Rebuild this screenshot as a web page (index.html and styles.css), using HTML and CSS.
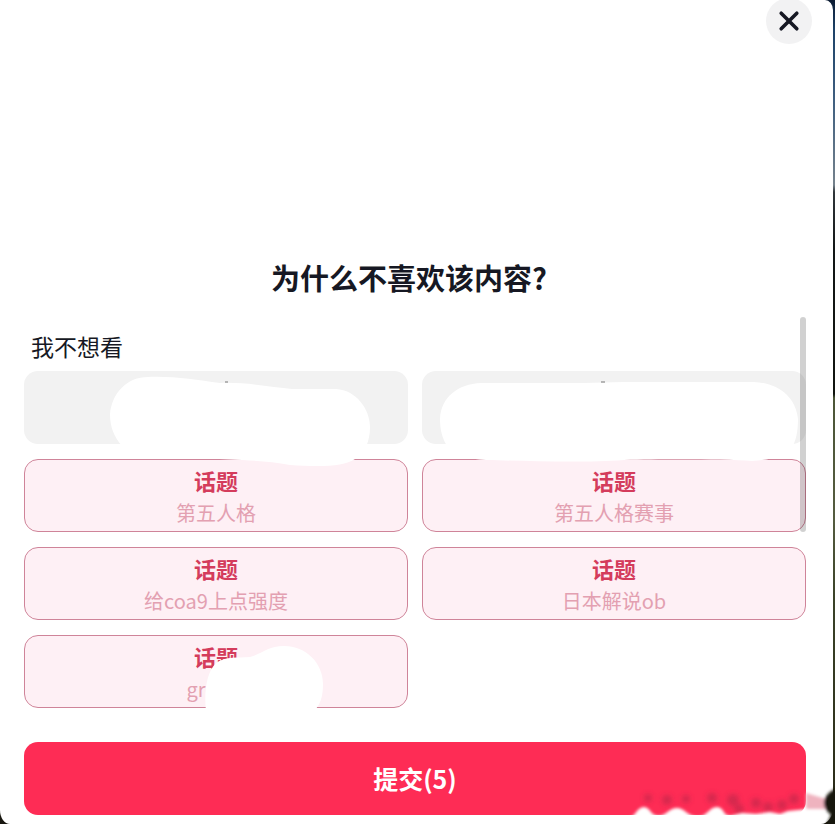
FILE: index.html
```html
<!DOCTYPE html>
<html lang="zh-CN">

<head>
    <meta charset="UTF-8" />
    <meta name="viewport" content="width=device-width, initial-scale=1.0" />
    <title>为什么不喜欢该内容?</title>
    <link rel="stylesheet" href="styles.css">
</head>

<body>

    <main class="sheet">
        <header class="sheet-header">
            <button class="close-btn" type="button" aria-label="关闭">
                <svg width="24" height="24" viewBox="0 0 24 24" aria-hidden="true">
                    <path d="M4.2 4.2L19.8 19.8M19.8 4.2L4.2 19.8" />
                </svg>
            </button>
        </header>

        <h1 class="title">为什么不喜欢该内容?</h1>

        <section class="reasons">
            <h2 class="section-label">我不想看</h2>

            <div class="options">
                <button class="option" type="button" aria-label="选项一"></button>
                <button class="option" type="button" aria-label="选项二"></button>
                <button class="option selected" type="button" aria-pressed="true">
                    <strong>话题</strong>
                    <span>第五人格</span>
                </button>
                <button class="option selected" type="button" aria-pressed="true">
                    <strong>话题</strong>
                    <span>第五人格赛事</span>
                </button>
                <button class="option selected" type="button" aria-pressed="true">
                    <strong>话题</strong>
                    <span>给coa9上点强度</span>
                </button>
                <button class="option selected" type="button" aria-pressed="true">
                    <strong>话题</strong>
                    <span>日本解说ob</span>
                </button>
                <button class="option selected" type="button" aria-pressed="true">
                    <strong>话题</strong>
                    <span class="cut">gr</span>
                </button>

                <!-- white brush strokes over the private parts -->
                <svg class="brush" width="782" height="340" viewBox="0 0 782 340" aria-hidden="true">
                    <path d="M98 75C90 66 86 56 86 43C88 22 103 6 124 6C150 5 172 9 196 12C222 11 248 16 268 18H312C332 19 346 38 346 56C346 70 341 82 331 88C320 96 295 96 266 94C250 91 236 90 218 89C190 88 150 86 120 82Z" />
                    <path d="M424 76C418 68 416 58 416 48C417 26 434 13 457 12L560 12L600 11H730C754 12 772 26 774 48C774 60 772 70 768 76C758 86 745 89 728 90C700 88 640 88 600 89C560 92 500 90 462 89C444 88 432 84 424 76Z" />
                    <path d="M182 340C180 322 182 302 192 292C202 285 214 287 226 286C240 282 244 275 260 275C282 275 299 292 299 313C299 326 296 334 290 340Z" />
                    <path class="speck" d="M201 11h3M577 11h4" />
                </svg>
            </div>

            <div class="scrollbar"></div>
        </section>

        <footer class="sheet-footer">
            <button class="submit-btn" type="submit">提交(5)</button>
            <svg class="smudge" width="215" height="44" viewBox="0 0 215 44" aria-hidden="true">
                <defs>
                    <filter id="soft" x="-10%" y="-30%" width="120%" height="160%">
                        <feGaussianBlur stdDeviation="1.5" />
                    </filter>
                    <filter id="softer" x="-10%" y="-50%" width="120%" height="200%">
                        <feGaussianBlur stdDeviation="2.5" />
                    </filter>
                </defs>
                <g filter="url(#softer)" fill="#b82648" opacity="0.6">
                    <circle cx="28" cy="18" r="4" />
                    <circle cx="47" cy="20" r="5" />
                    <circle cx="66" cy="19" r="4" />
                    <circle cx="92" cy="18" r="5" />
                    <circle cx="113" cy="20" r="6" />
                    <circle cx="119" cy="29" r="5" />
                    <circle cx="136" cy="23" r="5" />
                    <circle cx="148" cy="27" r="5" />
                    <circle cx="162" cy="25" r="5" />
                    <circle cx="174" cy="19" r="5" />
                </g>
                <g filter="url(#soft)">
                    <path fill="#fff" d="M9 38C16 36 17 27 24 27C30 27 31 36 38 36C46 36 49 28 57 28C64 28 68 36 77 37C87 37 89 27 97 27C104 27 103 36 110 36L122 33L136 34L150 32L160 34L168 31L188 29V40H9Z" />
                    <path fill="#efb3bf" d="M186 13L206 19V29H186Z" />
                    <path fill="#17150f" d="M222 6C212 9 206 14 204 21C203 28 208 32 211 35L206 46H222Z" />
                </g>
            </svg>
        </footer>
    </main>

</body>

</html>
```
FILE: styles.css
```css
* {
    box-sizing: border-box;
}

body {
    margin: 0;
    padding-right: 2px;
    font-family: "Noto Sans CJK SC", sans-serif;
    color: #161823;
    background: linear-gradient(#0c1c33 0, #1d4268 30px, #3f5f80 100px, #75828c 185px, #30363a 192px, #121616 250px, #10140f 394px, #4c5638 398px, #555c40 520px, #3a4228 600px, #2c2e1a 780px, #17150f 824px);
    overflow: hidden;
}

button {
    margin: 0;
    padding: 0;
    border: none;
    font-family: inherit;
    cursor: pointer;
}

.sheet {
    min-height: 100vh;
    padding: 0 27px 9px 24px;
    background-color: #fff;
    border-radius: 0 8px 12px 10px / 0 10px 16px 14px;
}

.sheet-header {
    display: flex;
    justify-content: flex-end;
    height: 44px;
    margin-right: -6px;
    align-items: flex-end;
}

.close-btn {
    display: flex;
    align-items: center;
    justify-content: center;
    flex: none;
    width: 46px;
    height: 46px;
    border-radius: 50%;
    background-color: #f2f2f3;
}

.close-btn svg {
    fill: none;
    stroke: #161823;
    stroke-width: 3.6;
    stroke-linecap: round;
}

.title {
    margin: 213px 0 0;
    padding-right: 12px;
    font-size: 29px;
    line-height: 40px;
    font-weight: 700;
    text-align: center;
}

.reasons {
    position: relative;
    margin-top: 20px;
    padding-top: 13px;
}

.section-label {
    margin: 0 7px 9px;
    font-size: 23px;
    line-height: 32px;
    font-weight: 400;
}

.options {
    position: relative;
    display: grid;
    grid-template-columns: 1fr 1fr;
    gap: 15px 14px;
}

.option {
    display: flex;
    flex-direction: column;
    align-items: center;
    justify-content: center;
    gap: 2px;
    height: 73px;
    border-radius: 14px;
    background-color: #f2f2f2;
}

.option.selected {
    border: 1px solid #cf8499;
    background-color: #fef0f5;
}

.option strong {
    font-size: 22px;
    line-height: 32px;
    font-weight: 700;
    color: #d43c5c;
}

.option span {
    font-size: 20px;
    line-height: 30px;
    color: #e3a0b1;
}

.option .cut {
    padding-right: 40px;
}

.brush {
    position: absolute;
    top: 0;
    left: 0;
    fill: #fff;
    pointer-events: none;
}

.brush .speck {
    stroke: #777;
}

.scrollbar {
    position: absolute;
    top: 0;
    right: 0;
    width: 6px;
    height: 215px;
    border-radius: 3px;
    background-color: rgba(0, 0, 0, 0.18);
}

.sheet-footer {
    position: relative;
    margin-top: 34px;
}

.submit-btn {
    display: block;
    width: 100%;
    height: 73px;
    padding-bottom: 2px;
    border-radius: 14px;
    font-size: 25px;
    font-weight: 700;
    color: #fff;
    background-color: #fe2c55;
}

.smudge {
    position: absolute;
    right: -29px;
    bottom: -9px;
    pointer-events: none;
}
```
